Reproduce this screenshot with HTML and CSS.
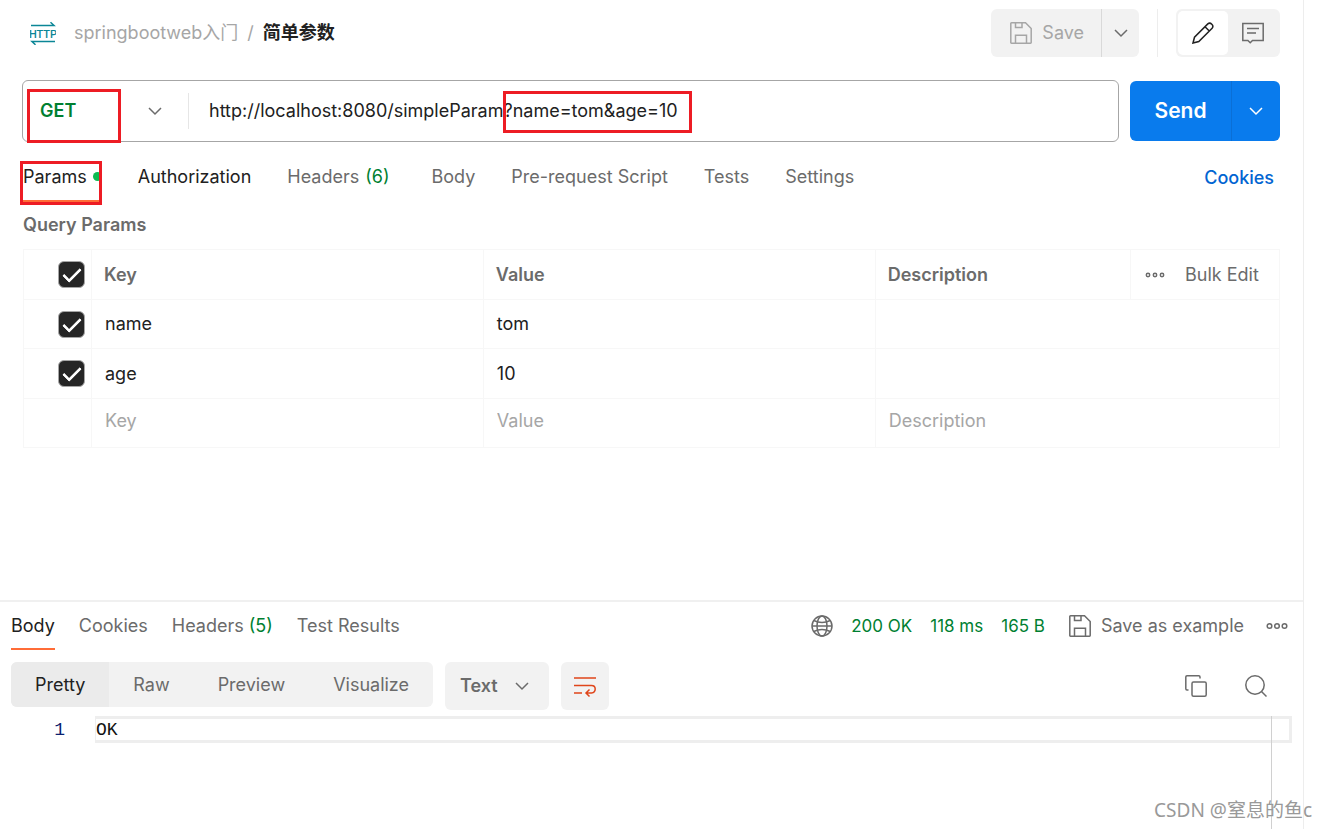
FILE: index.html
```html
<!DOCTYPE html>
<html lang="zh-CN">
<head>
<meta charset="utf-8">
<meta name="viewport" content="width=device-width, initial-scale=1">
<title>简单参数</title>
<link rel="stylesheet" href="styles.css">
</head>
<body>
<svg class="sprite" aria-hidden="true">
  <symbol id="save" viewBox="0 0 22 22"><path d="M1.5 .8H15.5L21.2 6.5V20.5Q21.2 21.2 20.5 21.2H1.5Q.8 21.2 .8 20.5V1.5Q.8 .8 1.5 .8ZM5.5 1V5.5H12V1M5.5 21V13.2H16.5V21"/></symbol>
  <symbol id="chevron" viewBox="0 0 14 14"><path d="M1 4L7 10L13 4"/></symbol>
</svg>
<div class="app">
  <main class="request">
    <header class="topbar">
      <svg class="http" viewBox="0 0 26 24" aria-hidden="true">
        <path d="M1 4.5H24L20.5 1.2M25 20.5H2L5.5 23.8"/>
        <text class="http-text" x="13" y="17" text-anchor="middle">HTTP</text>
      </svg>
      <nav class="crumbs" aria-label="Breadcrumb">
        <a href="#" class="crumb">springbootweb入门</a>
        <span class="slash">/</span>
        <strong class="current">简单参数</strong>
      </nav>
      <div class="split">
        <button class="save" disabled><svg class="icon"><use href="#save"/></svg>Save</button>
        <button class="save-more" aria-label="Save options"><svg class="chev"><use href="#chevron"/></svg></button>
      </div>
      <div class="modes">
        <div class="mode-group">
          <button class="mode mode-on" aria-label="Edit"><svg class="icon" viewBox="0 0 22 22"><path d="M1 21L2.5 15.2L15.8 1.9Q17.8 .2 19.8 2.2T20.1 6.2L6.8 19.5ZM13 4.7L17.3 9"/></svg></button>
          <button class="mode" aria-label="Comments"><svg class="icon" viewBox="0 0 22 22"><path d="M.8 1.5H21.2V18.5H10.5L8.2 20.8L5.9 18.5H.8ZM5 6.5H17M5 11H14"/></svg></button>
        </div>
      </div>
    </header>

    <form class="urlbar">
      <div class="urlbox">
        <div class="method">
          <select class="method-select" aria-label="Method"><option>GET</option><option>POST</option></select>
          <svg class="chev"><use href="#chevron"/></svg>
          <span class="mark mark-method"></span>
        </div>
        <div class="url">
          <input class="url-input" type="text" aria-label="Request URL" value="http://localhost:8080/simpleParam?name=tom&amp;age=10">
          <span class="mark mark-query"></span>
        </div>
      </div>
      <div class="send-group">
        <button type="button" class="send">Send</button>
        <button type="button" class="send-more" aria-label="Send options"><svg class="chev"><use href="#chevron"/></svg></button>
      </div>
    </form>

    <nav class="tabs">
      <button class="tab tab-on">Params<span class="dot"></span><span class="mark mark-params"></span></button>
      <button class="tab tab-dark">Authorization</button>
      <button class="tab tab-headers">Headers <span class="count">(6)</span></button>
      <button class="tab">Body</button>
      <button class="tab">Pre-request Script</button>
      <button class="tab">Tests</button>
      <button class="tab">Settings</button>
      <a href="#" class="cookies">Cookies</a>
    </nav>

    <h2 class="section-title">Query Params</h2>
    <table class="params">
      <colgroup><col class="c-check"><col class="c-key"><col class="c-value"><col><col class="c-bulk"></colgroup>
      <thead>
        <tr>
          <th class="check-cell"><input type="checkbox" class="check" checked aria-label="Select all"></th>
          <th>Key</th><th>Value</th><th>Description</th>
          <th>
            <div class="bulk">
              <button class="more" aria-label="More"><svg class="dots" viewBox="0 0 20 6"><circle cx="3" cy="3" r="1.7"/><circle cx="10" cy="3" r="1.7"/><circle cx="17" cy="3" r="1.7"/></svg></button>
              <button class="bulk-edit">Bulk Edit</button>
            </div>
          </th>
        </tr>
      </thead>
      <tbody>
        <tr><td class="check-cell"><input type="checkbox" class="check" checked aria-label="name"></td><td>name</td><td>tom</td><td colspan="2"></td></tr>
        <tr><td class="check-cell"><input type="checkbox" class="check" checked aria-label="age"></td><td>age</td><td>10</td><td colspan="2"></td></tr>
        <tr class="blank">
          <td></td>
          <td><input class="cell" type="text" placeholder="Key" aria-label="Key"></td>
          <td><input class="cell" type="text" placeholder="Value" aria-label="Value"></td>
          <td colspan="2"><input class="cell" type="text" placeholder="Description" aria-label="Description"></td>
        </tr>
      </tbody>
    </table>
  </main>

  <section class="response">
    <div class="res-head">
      <nav class="res-tabs">
        <button class="res-tab res-tab-on">Body</button>
        <button class="res-tab">Cookies</button>
        <button class="res-tab">Headers <span class="count">(5)</span></button>
        <button class="res-tab">Test Results</button>
      </nav>
      <div class="status">
        <svg class="icon globe" viewBox="0 0 22 22" aria-hidden="true"><circle cx="11" cy="11" r="10"/><ellipse cx="11" cy="11" rx="5" ry="10"/><path d="M2.8 5.5Q11 9.5 19.2 5.5M2.8 16.5Q11 12.5 19.2 16.5M1 11H21"/></svg>
        <span>200 OK</span><span>118 ms</span><span>165 B</span>
      </div>
      <button class="example"><svg class="icon"><use href="#save"/></svg>Save as example</button>
      <button class="more" aria-label="More"><svg class="dots-lg" viewBox="0 0 22 8"><circle cx="3.5" cy="4" r="2.3"/><circle cx="11" cy="4" r="2.3"/><circle cx="18.5" cy="4" r="2.3"/></svg></button>
    </div>
    <div class="tools">
      <div class="views">
        <button class="view view-on">Pretty</button>
        <button class="view">Raw</button>
        <button class="view">Preview</button>
        <button class="view">Visualize</button>
      </div>
      <div class="format">
        <select class="format-select" aria-label="Format"><option>Text</option><option>JSON</option></select>
        <svg class="chev"><use href="#chevron"/></svg>
      </div>
      <button class="wrap" aria-label="Wrap lines"><svg class="icon" viewBox="0 0 22 22"><path d="M0 3H22M0 10.5H17.5Q21.2 10.5 21.2 14T17.5 18H12M15.5 14.5L12 18L15.5 21.5M0 18H8"/></svg></button>
      <div class="actions">
        <button class="action" aria-label="Copy"><svg class="icon" viewBox="0 0 22 22"><path d="M3.5 15H2Q.8 15 .8 13.8V2Q.8 .8 2 .8H13.8Q15 .8 15 2V3.5"/><rect x="7" y="7" width="14.2" height="14.2" rx="1.5"/></svg></button>
        <button class="action" aria-label="Search"><svg class="icon" viewBox="0 0 22 22"><circle cx="10" cy="10" r="9.2"/><path d="M16.5 16.5L21.5 21.5"/></svg></button>
      </div>
    </div>
    <div class="editor">
      <span class="line-no">1</span>
      <code class="line">OK</code>
      <span class="ruler"></span>
    </div>
  </section>
</div>
<div class="watermark">CSDN @窒息的鱼c</div>
</body>
</html>
```

FILE: styles.css
```css
* { box-sizing: border-box; }

body {
  margin: 0;
  position: relative;
  background: #fff;
  color: #212121;
  font: 18px/24px Inter, "Noto Sans CJK SC", sans-serif;
}

button, input, select {
  margin: 0;
  padding: 0;
  border: 0;
  background: none;
  color: inherit;
  font: inherit;
}

select { appearance: none; }
a { text-decoration: none; }
.sprite { display: none; }

svg {
  display: block;
  flex: none;
  fill: none;
  stroke: #6b6b6b;
  stroke-width: 1.5;
}

.icon { width: 22px; height: 22px; }
.chev { width: 14px; height: 14px; pointer-events: none; }
.dots { width: 20px; height: 6px; }
.dots-lg { width: 22px; height: 8px; }

.app {
  display: flex;
  flex-direction: column;
  min-height: 100vh;
  margin-right: 23px;
  border-right: 1px solid #ededed;
}

.request { flex: 1; padding: 9px 23px 24px; }

/* Top bar */
.topbar { display: flex; align-items: center; height: 48px; }
.http { width: 26px; height: 24px; margin-left: 7px; stroke: #0b8696; }
.http-text { fill: #0b8696; stroke: none; font: 500 12px "Liberation Sans Narrow", "Roboto", sans-serif; font-size: 11px; }
.crumbs { display: flex; gap: 9px; margin: 0 auto 0 18px; }
.crumb, .slash { color: #a6a6a6; }
.current { font-weight: 600; }

.split { display: flex; height: 48px; border-radius: 6px; background: #f2f2f2; overflow: hidden; }
.save { display: flex; align-items: center; gap: 10px; padding: 0 17px 0 19px; color: #a6a6a6; }
.save .icon { stroke: #a6a6a6; }
.save-more { padding: 0 11px 0 12px; border-left: 1px solid #d9d9d9; }

.modes { margin-left: 18px; padding-left: 18px; border-left: 1px solid #ededed; }
.mode-group { display: flex; height: 48px; padding: 2px; border-radius: 6px; background: #f2f2f2; }
.mode { display: grid; place-items: center; width: 50px; border-radius: 5px; }
.mode-on { background: #fff; }
.mode-on .icon { stroke: #212121; }

/* Request line */
.urlbar { display: flex; align-items: center; gap: 11px; margin: 23px 0 0 -1px; }
.urlbox { display: flex; flex: 1; align-items: center; height: 62px; border: 1px solid #a6a6a6; border-radius: 6px; }
.method { position: relative; display: flex; align-items: center; width: 166px; height: 36px; border-right: 1px solid #e6e6e6; }
.method-select { width: 140px; margin-right: -15px; padding-left: 17px; color: #007f31; font-weight: 600; }
.url { position: relative; flex: 1; padding: 0 20px; }
.url-input { display: block; width: 100%; }

.send-group { display: flex; height: 60px; border-radius: 6px; background: #097bed; color: #fff; overflow: hidden; }
.send { width: 101px; font-size: 21px; font-weight: 600; }
.send-more { display: grid; place-items: center; width: 49px; border-left: 1px solid #0a6fd6; }
.send-more .chev { stroke: #fff; }

/* Outlined callouts laid over the page */
.mark { position: absolute; border: 3px solid #ed1c24; pointer-events: none; }
.mark-method { top: -4px; left: 4px; width: 94px; height: 54px; }
.mark-query { top: -8px; left: 314px; width: 189px; height: 42px; }
.mark-params { top: 8px; left: -3px; width: 82px; height: 44px; }

/* Request tabs */
.tabs { display: flex; gap: 36px; margin-top: 11px; }
.tab { position: relative; display: flex; align-items: center; gap: 6px; height: 49px; color: #6b6b6b; border-bottom: 2px solid transparent; white-space: nowrap; }
.tab-on { color: #212121; border-color: #ff6c37; }
.tab-dark { color: #212121; }
.tab-headers { margin-right: 6px; }
.dot { width: 9px; height: 9px; border-radius: 50%; background: #0cbb52; }
.count { color: #007f31; }
.cookies { align-self: center; margin: 0 6px 0 auto; color: #0265d2; font-weight: 500; }

/* Parameter table */
.section-title { margin: 11px 0 12px; color: #6b6b6b; font-size: 18px; line-height: 24px; font-weight: 600; }
.params { width: 100%; border-collapse: collapse; table-layout: fixed; border: 1px solid #ededed; }
.c-check { width: 68px; }
.c-key, .c-value { width: 31.2%; }
.c-bulk { width: 149px; }
.params th, .params td { height: 49px; padding: 0 13px; border: 1px solid #f7f7f7; text-align: left; }
.params tr:nth-child(odd) > th, .params tr:nth-child(2) > td { height: 50px; }
.params th { color: #6b6b6b; font-weight: 600; padding: 0 12px; }
.params .check-cell { padding: 0 6px 0 34px; }
.cell { display: block; width: 100%; }
.blank td { padding-bottom: 5px; }
.cell::placeholder { color: #a6a6a6; opacity: 1; }

.check {
  appearance: none;
  display: block;
  position: relative;
  width: 27px;
  height: 27px;
  border: 1px solid #a6a6a6;
  border-radius: 6px;
}
.check:checked { background: #262626; }
.check:checked::after {
  content: "";
  box-sizing: border-box;
  position: absolute;
  top: 2px;
  left: 8px;
  width: 10px;
  height: 18px;
  border: solid #fff;
  border-width: 0 3px 3px 0;
  border-radius: 1px;
  transform: rotate(45deg);
}

.bulk { display: flex; align-items: center; gap: 20px; padding-left: 2px; white-space: nowrap; }
.bulk-edit { color: #6b6b6b; font-weight: 400; }

/* Response */
.response { flex: none; display: flex; flex-direction: column; min-height: 229px; border-top: 2px solid #f0f0f0; }
.res-head { display: flex; align-items: center; height: 48px; padding: 0 15px 0 11px; color: #6b6b6b; }
.res-tabs { display: flex; align-self: stretch; gap: 24px; margin-right: auto; }
.res-tab { padding-top: 2px; border-bottom: 2px solid transparent; white-space: nowrap; }
.res-tab-on { color: #212121; border-color: #ff6c37; }
.status { display: flex; align-items: center; gap: 18px; color: #007f31; font-size: 17px; }
.example { display: flex; align-items: center; gap: 10px; margin: 0 22px 0 24px; }

.tools { display: flex; align-items: flex-start; gap: 12px; padding: 12px 36px 6px 11px; color: #6b6b6b; }
.views { display: flex; height: 45px; border-radius: 6px; background: #f2f2f2; overflow: hidden; }
.view { padding: 0 24px; }
.view-on { background: #ebebeb; color: #212121; }
.format { display: flex; align-items: center; width: 104px; height: 48px; border-radius: 6px; background: #f2f2f2; }
.format-select { width: 84px; height: 48px; margin-right: -14px; padding-left: 15px; font-weight: 600; }
.wrap { display: grid; place-items: center; width: 48px; height: 48px; border-radius: 6px; background: #f2f2f2; }
.wrap .icon { stroke: #e0451a; }
.actions { display: flex; align-items: center; gap: 38px; height: 48px; margin-left: auto; }

.editor { position: relative; flex: 1; display: flex; align-items: flex-start; padding-right: 11px; font-family: "Liberation Mono", monospace; }
.line-no { width: 65px; margin-right: 30px; color: #0b216f; line-height: 28px; text-align: right; }
.line { flex: 1; height: 27px; border: 3px solid #eee; border-left-width: 1px; color: #111; font: inherit; line-height: 22px; }
.ruler { position: absolute; top: 0; right: 11px; bottom: 0; width: 21px; border-left: 1px solid #d0d0d0; }

.watermark { position: absolute; right: 15px; bottom: 7px; color: #999; font-family: "Noto Sans", "Noto Sans CJK SC", sans-serif; font-size: 19px; }
```
